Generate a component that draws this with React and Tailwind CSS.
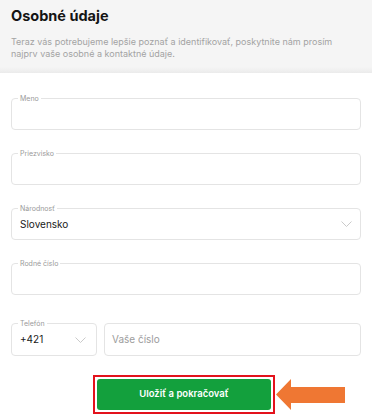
import React from 'react';

const font = { fontFamily: 'Inter, "Noto Sans", sans-serif' };

const Chevron = ({ className = '' }) => (
  <svg width="11" height="6" viewBox="0 0 11 6" className={className} fill="none">
    <path d="M0.5 0.5 L5.5 5.5 L10.5 0.5" stroke="#c4c4c4" strokeWidth="0.9" />
  </svg>
);

// outlined field with the label sitting on the top border
const Field = ({ label, children, className = '' }) => (
  <div className={`relative h-[32px] rounded-[4px] border border-[#e4e4e4] bg-white ${className}`}>
    {label && (
      <span className="absolute -top-[5px] left-[6px] bg-white px-[2px] text-[7px] leading-[9px] text-[#9a9a9a]">
        {label}
      </span>
    )}
    {children}
  </div>
);

const App = () => {
  return (
    <div className="w-[372px] h-[420px] overflow-hidden bg-white" style={font}>
      {/* Header */}
      <div className="bg-[#f5f5f5]">
        <div className="px-[11px] pt-[6px] pb-[7px]">
          <h1 className="text-[14.5px] leading-[20px] font-bold text-[#141414]">Osobné údaje</h1>
          <p className="mt-[10px] text-[9px] leading-[12px] text-[#a3a3a3]">
            Teraz vás potrebujeme lepšie poznať a identifikovať, poskytnite nám prosím najprv vaše osobné a kontaktné údaje.
          </p>
        </div>
        <div className="h-[6px] bg-linear-to-b from-[#f5f5f5] to-[#ebebeb]" />
      </div>

      {/* Form */}
      <div className="px-[11px] pt-[25px] flex flex-col gap-[23px]">
        <Field label="Meno" />
        <Field label="Priezvisko" />
        <Field label="Národnosť">
          <div className="flex h-full items-center justify-between pl-[8px] pr-[8px]">
            <span className="text-[10px] text-[#1a1a1a]">Slovensko</span>
            <Chevron />
          </div>
        </Field>
        <Field label="Rodné číslo" />
        <div className="mt-[5px] flex gap-[7px]">
          <Field label="Telefón" className="w-[86px] h-[33px] shrink-0">
            <div className="flex h-full items-center justify-between pl-[8px] pr-[10px]">
              <span className="text-[10px] text-[#1a1a1a]">+421</span>
              <Chevron />
            </div>
          </Field>
          <Field className="flex-1 h-[33px]">
            <div className="flex h-full items-center pl-[7px]">
              <span className="text-[10px] text-[#9c9c9c]">Vaše číslo</span>
            </div>
          </Field>
        </div>
      </div>

      {/* Button */}
      <div className="mt-[19px] flex justify-center pr-[4px]">
        <div className="relative border-2 border-[#e3121c] p-[2px]">
          <button className="flex h-[31px] w-[174px] items-center justify-center rounded-[3px] bg-[#13a03d] text-[9.5px] font-semibold text-white">
            Uložiť a pokračovať
          </button>
          <svg
            className="absolute left-full top-[2px] ml-[3px]"
            width="70"
            height="32"
            viewBox="0 0 70 32"
          >
            <path d="M0 15.5 L15 0 L15 8 L69 8 L69 24 L15 24 L15 31 Z" fill="#ef7733" />
          </svg>
        </div>
      </div>
    </div>
  );
};

export default App;
